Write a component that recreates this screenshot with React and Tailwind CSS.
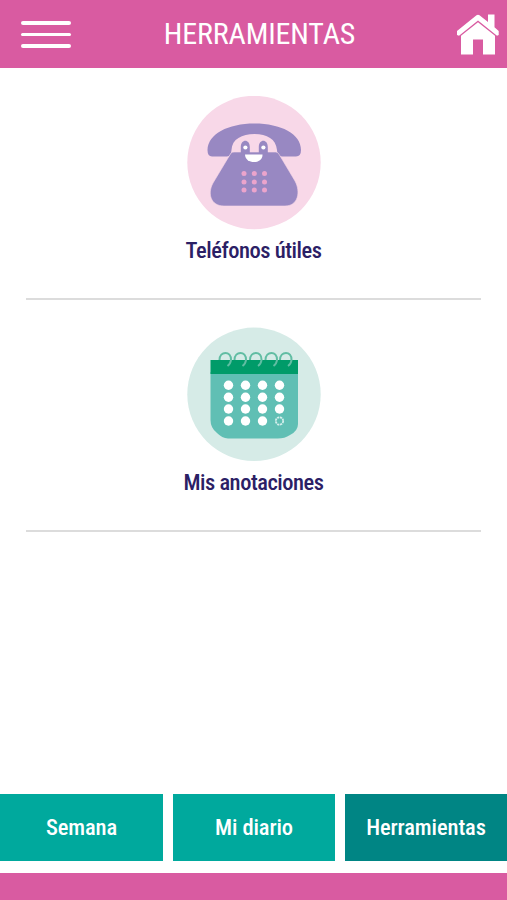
const labelFont = "font-['Roboto_Condensed','Roboto',sans-serif] [font-stretch:75%] whitespace-nowrap";

function MenuIcon() {
  return (
    <div className="mt-px flex w-[50px] flex-col gap-2">
      <span className="h-[3.8px] rounded-sm bg-white" />
      <span className="h-[3.8px] rounded-sm bg-white" />
      <span className="h-[3.8px] rounded-sm bg-white" />
    </div>
  );
}

function HomeIcon() {
  return (
    <svg width="43" height="42" viewBox="0 0 43 42" fill="#fff" aria-label="Inicio">
      <path d="M1 18 20.500 2.300Q22 1 23.500 2.300L32 9V1.500H38.500V14.300L42.700 18V22L41 22.700 22 7.600 3 22.700 1 22Z" />
      <path d="M5 22.700 22 9.300 39 22.700V41.500H27V26.500H17V41.500H5Z" />
    </svg>
  );
}

function PhoneArt() {
  return (
    <svg width="134" height="134" viewBox="187 96 134 134" aria-hidden="true">
      <circle cx="254" cy="162.500" r="66.700" fill="#f8d8e8" />
      <path d="M212 156.500Q207.500 156.500 207.500 150C208 134 228 123.500 254.500 123.500S301 134 301 150Q301 156.500 296 156.500H282Q277 156.500 277 150C276 139 267 134 254.500 134S232 139 231.500 150Q231 156.500 227 156.500Z" fill="#9888c2" />
      <path d="M231 153Q232 152 234 152H276Q278 152 279.500 155L295 181C301 192 298 206 285 206H224C211 206 207 194 213 183Z" fill="#9888c2" stroke="#f8d8e8" strokeWidth=".600" />
      <path d="M240.800 154V147C240.800 138.500 249.800 138.500 249.800 147V154ZM258.800 154V147C258.800 138.500 267.800 138.500 267.800 147V154Z" fill="#9888c2" />
      <circle cx="245.400" cy="147.500" r="2.100" fill="#fff" />
      <circle cx="263.400" cy="147.500" r="2.100" fill="#fff" />
      <path d="M245 154.500H262.500C263 164.500 245 164.500 245 154.500Z" fill="#fff" />
      {[173.5, 182, 190].map((y) =>
        [244, 254.3, 264.5].map((x) => <circle key={`${x}-${y}`} cx={x} cy={y} r="2.500" fill="#eba4cc" />)
      )}
    </svg>
  );
}

function CalendarArt() {
  return (
    <svg width="134" height="134" viewBox="187 327 134 134" aria-hidden="true">
      <circle cx="254" cy="394.300" r="66.700" fill="#d6ebe7" />
      <path d="M210.500 372H298V424Q298 431 290 435 284 439 276 438.500H228Q222 438 217 433 210.500 428 210.500 420Z" fill="#60bfb4" />
      <path d="M210.500 360H298V374H210.500Z" fill="#009b69" />
      {[225.5, 240.5, 256, 271.5, 286].map((x) => (
        <path key={x} d={`M${x - 6} 360C${x - 6} 350.500 ${x + 6} 350.500 ${x + 5.5} 360Q${x + 5} 364 ${x + 2} 366`} fill="none" stroke="#61bda3" strokeWidth="2" />
      ))}
      {[385.3, 397.3, 409, 421].map((y, row) =>
        [228.5, 245.5, 262.5, 279.5].map((x, col) =>
          row === 3 && col === 3 ? (
            <circle key={`${x}-${y}`} cx={x} cy={y} r="3.700" fill="none" stroke="#d5efec" strokeWidth="1.800" strokeDasharray="2.200 .700" />
          ) : (
            <circle key={`${x}-${y}`} cx={x} cy={y} r="4.700" fill="#fff" />
          )
        )
      )}
    </svg>
  );
}

function Tool({ art, title, spacing }) {
  return (
    <section className={`mx-auto flex h-[232px] w-[455px] flex-col items-center border-b-2 border-[#dcdcdc] ${spacing}`}>
      {art}
      <h2 className={`${labelFont} text-[22.5px] leading-[34px] font-medium tracking-[-0.47px] text-[#2b2065]`}>{title}</h2>
    </section>
  );
}

export default function App() {
  return (
    <div className="flex h-[900px] w-[507px] flex-col bg-white">
      <header className="flex h-[68px] items-center justify-between bg-[#d95ba1] pr-[8px] pl-[21px]">
        <MenuIcon />
        <h1 className={`${labelFont} mr-[8px] text-[30px] leading-[36px] tracking-[-0.15px] text-white`}>HERRAMIENTAS</h1>
        <HomeIcon />
      </header>
      <main className="flex-1">
        <Tool art={<PhoneArt />} title="Teléfonos útiles" spacing="gap-[3px] pt-[28px]" />
        <Tool art={<CalendarArt />} title="Mis anotaciones" spacing="gap-[4px] pt-[27px]" />
      </main>
      <nav className={`${labelFont} mb-[12px] grid h-[67px] grid-cols-[163px_162px_162px] gap-x-[10px] text-[22.5px] text-white`}>
        <button className="bg-[#00a99d] font-medium tracking-[-0.1px]">Semana</button>
        <button className="bg-[#00a99d] font-medium tracking-[-0.1px]">Mi diario</button>
        <button className="bg-[#008584] font-medium tracking-[-0.1px]">Herramientas</button>
      </nav>
      <footer className="h-[27px] bg-[#d95ba1]" />
    </div>
  );
}
